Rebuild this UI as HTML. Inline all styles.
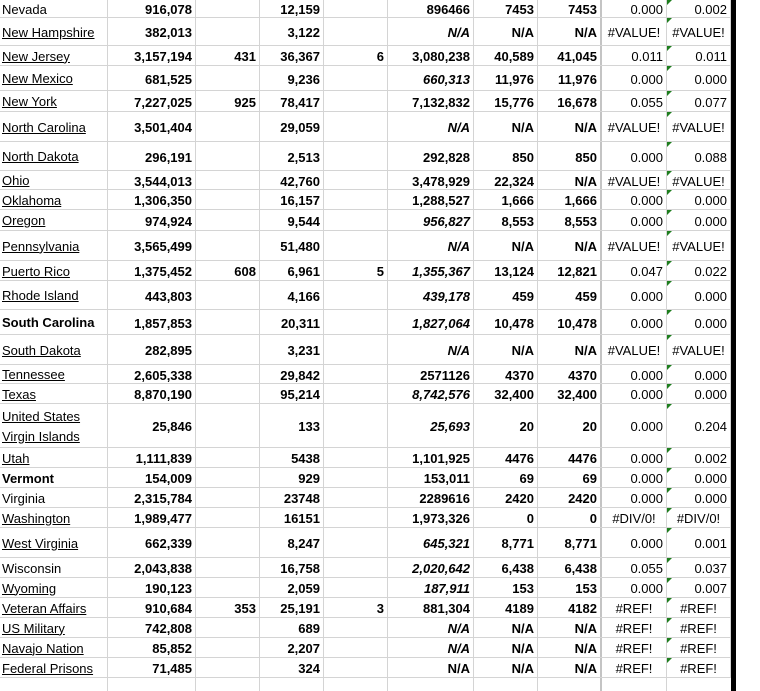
<!DOCTYPE html>
<html><head><meta charset="utf-8"><style>
*{margin:0;padding:0;box-sizing:border-box}
body{width:760px;height:691px;overflow:hidden;background:#fff;font-family:"Liberation Sans",Arial,sans-serif;font-size:13px;color:#000;position:relative}
.r{display:flex;border-bottom:1px solid #d4d4d4;width:731px}
.r>div{border-right:1px solid #d4d4d4;display:flex;align-items:center;justify-content:flex-end;padding-right:3px;padding-top:2px;font-weight:bold;white-space:nowrap;position:relative;overflow:visible}
.r>div:nth-child(1){width:108px;justify-content:flex-start;padding-left:2px;font-weight:normal;white-space:normal;line-height:20px}
.r>div:nth-child(2){width:88px}
.r>div:nth-child(3){width:64px}
.r>div:nth-child(4){width:64px}
.r>div:nth-child(5){width:64px}
.r>div:nth-child(6){width:86px}
.r>div:nth-child(7){width:64px}
.r>div:nth-child(8){width:64px;border-right:2px solid #c4c4c4}
.r>div:nth-child(9){width:65px;font-weight:normal}
.r>div:nth-child(10){width:64px;font-weight:normal}
.r>div:nth-child(10)::before{content:"";position:absolute;left:0;top:0;border-top:5px solid #1e7e1e;border-right:5px solid transparent}
.r.e>div:nth-child(10)::before{display:none}
.u{text-decoration:underline}
.b{font-weight:bold!important}
.i{font-style:italic}
.c{justify-content:center!important;padding-right:0!important}
#bar{position:absolute;left:731px;top:0;width:5px;height:691px;background:#000}
</style></head><body>
<div class="r" style="height:18px"><div>Nevada</div><div>916,078</div><div></div><div>12,159</div><div></div><div>896466</div><div>7453</div><div>7453</div><div>0.000</div><div>0.002</div></div>
<div class="r" style="height:28px"><div><span class="u">New Hampshire</span></div><div>382,013</div><div></div><div>3,122</div><div></div><div class="i">N/A</div><div>N/A</div><div>N/A</div><div class="c">#VALUE!</div><div class="c">#VALUE!</div></div>
<div class="r" style="height:20px"><div><span class="u">New Jersey</span></div><div>3,157,194</div><div>431</div><div>36,367</div><div>6</div><div>3,080,238</div><div>40,589</div><div>41,045</div><div>0.011</div><div>0.011</div></div>
<div class="r" style="height:25px"><div><span class="u">New Mexico</span></div><div>681,525</div><div></div><div>9,236</div><div></div><div class="i">660,313</div><div>11,976</div><div>11,976</div><div>0.000</div><div>0.000</div></div>
<div class="r" style="height:21px"><div><span class="u">New York</span></div><div>7,227,025</div><div>925</div><div>78,417</div><div></div><div>7,132,832</div><div>15,776</div><div>16,678</div><div>0.055</div><div>0.077</div></div>
<div class="r" style="height:30px"><div><span class="u">North Carolina</span></div><div>3,501,404</div><div></div><div>29,059</div><div></div><div class="i">N/A</div><div>N/A</div><div>N/A</div><div class="c">#VALUE!</div><div class="c">#VALUE!</div></div>
<div class="r" style="height:29px"><div><span class="u">North Dakota</span></div><div>296,191</div><div></div><div>2,513</div><div></div><div>292,828</div><div>850</div><div>850</div><div>0.000</div><div>0.088</div></div>
<div class="r" style="height:19px"><div><span class="u">Ohio</span></div><div>3,544,013</div><div></div><div>42,760</div><div></div><div>3,478,929</div><div>22,324</div><div>N/A</div><div class="c">#VALUE!</div><div class="c">#VALUE!</div></div>
<div class="r" style="height:20px"><div><span class="u">Oklahoma</span></div><div>1,306,350</div><div></div><div>16,157</div><div></div><div>1,288,527</div><div>1,666</div><div>1,666</div><div>0.000</div><div>0.000</div></div>
<div class="r" style="height:21px"><div><span class="u">Oregon</span></div><div>974,924</div><div></div><div>9,544</div><div></div><div class="i">956,827</div><div>8,553</div><div>8,553</div><div>0.000</div><div>0.000</div></div>
<div class="r" style="height:30px"><div><span class="u">Pennsylvania</span></div><div>3,565,499</div><div></div><div>51,480</div><div></div><div class="i">N/A</div><div>N/A</div><div>N/A</div><div class="c">#VALUE!</div><div class="c">#VALUE!</div></div>
<div class="r" style="height:20px"><div><span class="u">Puerto Rico</span></div><div>1,375,452</div><div>608</div><div>6,961</div><div>5</div><div class="i">1,355,367</div><div>13,124</div><div>12,821</div><div>0.047</div><div>0.022</div></div>
<div class="r" style="height:29px"><div><span class="u">Rhode Island</span></div><div>443,803</div><div></div><div>4,166</div><div></div><div class="i">439,178</div><div>459</div><div>459</div><div>0.000</div><div>0.000</div></div>
<div class="r" style="height:25px"><div class="b">South Carolina</div><div>1,857,853</div><div></div><div>20,311</div><div></div><div class="i">1,827,064</div><div>10,478</div><div>10,478</div><div>0.000</div><div>0.000</div></div>
<div class="r" style="height:30px"><div><span class="u">South Dakota</span></div><div>282,895</div><div></div><div>3,231</div><div></div><div class="i">N/A</div><div>N/A</div><div>N/A</div><div class="c">#VALUE!</div><div class="c">#VALUE!</div></div>
<div class="r" style="height:19px"><div><span class="u">Tennessee</span></div><div>2,605,338</div><div></div><div>29,842</div><div></div><div>2571126</div><div>4370</div><div>4370</div><div>0.000</div><div>0.000</div></div>
<div class="r" style="height:20px"><div><span class="u">Texas</span></div><div>8,870,190</div><div></div><div>95,214</div><div></div><div class="i">8,742,576</div><div>32,400</div><div>32,400</div><div>0.000</div><div>0.000</div></div>
<div class="r" style="height:44px"><div><span class="u">United States Virgin Islands</span></div><div>25,846</div><div></div><div>133</div><div></div><div class="i">25,693</div><div>20</div><div>20</div><div>0.000</div><div>0.204</div></div>
<div class="r" style="height:20px"><div><span class="u">Utah</span></div><div>1,111,839</div><div></div><div>5438</div><div></div><div>1,101,925</div><div>4476</div><div>4476</div><div>0.000</div><div>0.002</div></div>
<div class="r" style="height:20px"><div class="b">Vermont</div><div>154,009</div><div></div><div>929</div><div></div><div>153,011</div><div>69</div><div>69</div><div>0.000</div><div>0.000</div></div>
<div class="r" style="height:20px"><div>Virginia</div><div>2,315,784</div><div></div><div>23748</div><div></div><div>2289616</div><div>2420</div><div>2420</div><div>0.000</div><div>0.000</div></div>
<div class="r" style="height:20px"><div><span class="u">Washington</span></div><div>1,989,477</div><div></div><div>16151</div><div></div><div>1,973,326</div><div>0</div><div>0</div><div class="c">#DIV/0!</div><div class="c">#DIV/0!</div></div>
<div class="r" style="height:30px"><div><span class="u">West Virginia</span></div><div>662,339</div><div></div><div>8,247</div><div></div><div class="i">645,321</div><div>8,771</div><div>8,771</div><div>0.000</div><div>0.001</div></div>
<div class="r" style="height:20px"><div>Wisconsin</div><div>2,043,838</div><div></div><div>16,758</div><div></div><div class="i">2,020,642</div><div>6,438</div><div>6,438</div><div>0.055</div><div>0.037</div></div>
<div class="r" style="height:20px"><div><span class="u">Wyoming</span></div><div>190,123</div><div></div><div>2,059</div><div></div><div class="i">187,911</div><div>153</div><div>153</div><div>0.000</div><div>0.007</div></div>
<div class="r" style="height:20px"><div><span class="u">Veteran Affairs</span></div><div>910,684</div><div>353</div><div>25,191</div><div>3</div><div>881,304</div><div>4189</div><div>4182</div><div class="c">#REF!</div><div class="c">#REF!</div></div>
<div class="r" style="height:20px"><div><span class="u">US Military</span></div><div>742,808</div><div></div><div>689</div><div></div><div class="i">N/A</div><div>N/A</div><div>N/A</div><div class="c">#REF!</div><div class="c">#REF!</div></div>
<div class="r" style="height:20px"><div><span class="u">Navajo Nation</span></div><div>85,852</div><div></div><div>2,207</div><div></div><div class="i">N/A</div><div>N/A</div><div>N/A</div><div class="c">#REF!</div><div class="c">#REF!</div></div>
<div class="r" style="height:20px"><div><span class="u">Federal Prisons</span></div><div>71,485</div><div></div><div>324</div><div></div><div>N/A</div><div>N/A</div><div>N/A</div><div class="c">#REF!</div><div class="c">#REF!</div></div>
<div class="r e" style="height:13px;border-bottom:none"><div></div><div></div><div></div><div></div><div></div><div></div><div></div><div></div><div></div><div style="border-right:none"></div></div>
<div id="bar"></div>
</body></html>
